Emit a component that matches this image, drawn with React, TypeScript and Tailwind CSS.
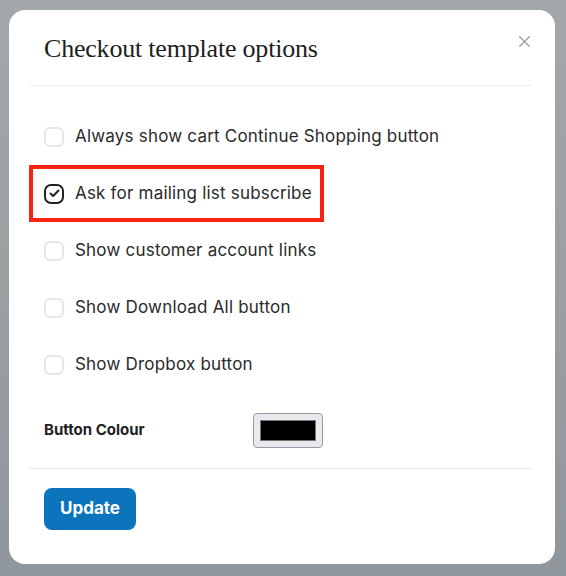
import { X } from 'lucide-react';

const options = [
  { label: 'Always show cart Continue Shopping button', checked: false },
  { label: 'Ask for mailing list subscribe', checked: true, highlight: true },
  { label: 'Show customer account links', checked: false },
  { label: 'Show Download All button', checked: false },
  { label: 'Show Dropbox button', checked: false },
];

function Checkbox({ checked }: { checked: boolean }) {
  if (checked) {
    return (
      <span className="w-5 h-5 rounded-[7px] border-2 border-[#222] flex items-center justify-center shrink-0">
        <svg width="11" height="9" viewBox="0 0 11 9" fill="none">
          <path d="M1.5 4.5 L4.2 7 L9.5 1.5" stroke="#222" strokeWidth="2" strokeLinecap="round" strokeLinejoin="round" />
        </svg>
      </span>
    );
  }
  return <span className="w-5 h-5 rounded-[6px] border-2 border-[#e6e6e6] bg-white shrink-0" />;
}

export default function App() {
  return (
    <div className="w-[566px] h-[576px] overflow-hidden bg-gradient-to-b from-[#a2a7ab] via-[#9a9fa2] to-[#8f969c] pt-[10px] pl-[9px]">
      <div className="w-[546px] h-[554px] bg-white rounded-[16px] flex flex-col font-['Inter',sans-serif] text-[#2a2a2a]">
        {/* Header */}
        <div className="h-[75px] flex items-center justify-between pl-[35px] pr-[21px]">
          <h2 className="font-['Liberation_Serif',serif] text-[26px] text-[#1e1e1e] tracking-[-0.2px] pt-[2px]">Checkout template options</h2>
          <button className="text-[#9a9a9a] -mt-[12px]">
            <X size={19} strokeWidth={1.6} />
          </button>
        </div>
        <div className="mx-5 mr-[23px] h-px bg-[#eeeeee]" />

        {/* Options */}
        <div className="pt-[22px] pl-[35px] flex flex-col">
          {options.map((o) =>
            o.highlight ? (
              <div
                key={o.label}
                className="h-[57px] w-[295px] -ml-[15px] pl-[11px] border-4 border-[#fa2211] flex items-center gap-[11px]"
              >
                <Checkbox checked={o.checked} />
                <span className="text-[17px] tracking-[0.2px]">{o.label}</span>
              </div>
            ) : (
              <div key={o.label} className="h-[57px] flex items-center gap-[11px]">
                <Checkbox checked={o.checked} />
                <span className="text-[17px] tracking-[0.2px]">{o.label}</span>
              </div>
            )
          )}
          <div className="h-[75px] flex items-center">
            <span className="w-[209px] text-[15px] font-bold text-[#222]">Button Colour</span>
            <div className="w-[70px] h-[35px] rounded-[4px] border border-[#9a99a6] bg-[#e9e9ed] p-[6px]">
              <div className="w-full h-full bg-black border border-[#777]" />
            </div>
          </div>
        </div>
        <div className="mx-5 mr-[23px] h-px bg-[#e3e8ea]" />

        {/* Footer */}
        <div className="pt-[19px] pl-[35px]">
          <button className="h-[42px] px-[16px] rounded-[8px] bg-[#0b74bd] text-white text-[17px] font-bold">
            Update
          </button>
        </div>
      </div>
    </div>
  );
}
